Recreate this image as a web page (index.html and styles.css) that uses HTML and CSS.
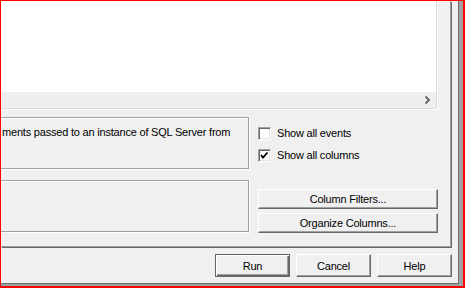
FILE: index.html
```html
<!DOCTYPE html>
<html lang="en">
<head>
  <meta charset="UTF-8" />
  <title>Trace Properties</title>
  <link rel="stylesheet" href="styles.css">
</head>
<body>
  <div class="frame">
    <div class="dialog">
      <div class="dialog-inner">

        <!-- tab page -->
        <div class="page">
          <div class="grid-pane">
            <div class="grid-body"></div>
            <div class="hscroll">
              <svg class="scroll-arrow" width="16" height="16" viewBox="0 0 16 16">
                <polyline points="5.5,4.5 9,8 5.5,11.5" fill="none" stroke="#606060" stroke-width="1.8"/>
              </svg>
            </div>
          </div>

          <div class="options">
            <div class="info-col">
              <div class="groupbox desc">ments passed to an instance of SQL Server from</div>
              <div class="groupbox second"></div>
            </div>

            <div class="side-col">
              <label class="check-row first">
                <span class="check"></span>
                <span>Show all events</span>
              </label>
              <label class="check-row">
                <span class="check">
                  <svg width="11" height="11" viewBox="0 0 11 11">
                    <polyline points="2,5 4,7.5 8.5,2.5" fill="none" stroke="#000" stroke-width="1.8"/>
                  </svg>
                </span>
                <span>Show all columns</span>
              </label>
              <button class="btn wide filters">Column Filters...</button>
              <button class="btn wide">Organize Columns...</button>
            </div>
          </div>
        </div>

        <div class="actions">
          <button class="btn action default">Run</button>
          <button class="btn action">Cancel</button>
          <button class="btn action">Help</button>
        </div>

      </div>
    </div>
  </div>
</body>
</html>
```

FILE: styles.css
```css
* {
  margin: 0;
  padding: 0;
  box-sizing: border-box;
}

body {
  overflow: hidden;
  background: #f0f0f0;
  font-family: "Liberation Sans", Arial, sans-serif;
  font-size: 11px;
  letter-spacing: -0.2px;
  color: #000;
}

.frame {
  width: 465px;
  height: 288px;
  border-style: solid;
  border-color: #ff0000;
  border-width: 1px 2px 2px 1px;
  overflow: hidden;
}

.dialog {
  height: 100%;
  border-right: 4px solid #a0a0a0;
  border-bottom: 2px solid #a0a0a0;
}

.dialog-inner {
  height: 100%;
  display: flex;
  flex-direction: column;
  border-right: 1px solid #6d6d6d;
  border-bottom: 1px solid #6d6d6d;
}

/* tab page */
.page {
  width: 450px;
  height: 246px;
  border-right: 1px solid #a0a0a0;
  border-bottom: 1px solid #a0a0a0;
  box-shadow: 1px 1px 0 #696969;
}

.grid-pane {
  width: 436px;
  height: 108px;
  display: flex;
  flex-direction: column;
  border-right: 1px solid #dcdcdc;
  border-bottom: 1px solid #dcdcdc;
  box-shadow: 1px 1px 0 #fff;
}

.grid-body {
  height: 91px;
  background: #fff;
}

.hscroll {
  height: 16px;
  display: flex;
  justify-content: flex-end;
  background: #efefef;
}

.scroll-arrow {
  display: block;
}

.options {
  display: flex;
  margin-top: 8px;
}

.info-col {
  width: 288px;
  margin-left: -40px;
  display: flex;
  flex-direction: column;
  gap: 11px;
}

.groupbox {
  height: 52px;
  border: 1px solid #a0a0a0;
  box-shadow: 1px 1px 0 #fff, inset 1px 1px 0 #fff;
}

.desc {
  padding: 8px 0 0 40px;
  line-height: 13px;
  white-space: nowrap;
}

.side-col {
  width: 180px;
  margin-left: 9px;
  display: flex;
  flex-direction: column;
}

.check-row {
  display: flex;
  align-items: center;
  gap: 6px;
  height: 13px;
  line-height: 13px;
  margin-top: 9px;
}

.check-row.first {
  margin-top: 10px;
}

.check {
  width: 13px;
  height: 13px;
  display: flex;
  align-items: center;
  justify-content: center;
  background: #fff;
  border: 1px solid;
  border-color: #a0a0a0 #fff #fff #a0a0a0;
  box-shadow: inset 1px 1px 0 #696969, inset -1px -1px 0 #e3e3e3;
}

.check svg {
  display: block;
}

.btn {
  font: inherit;
  letter-spacing: inherit;
  color: #000;
  background: #f0f0f0;
  border: 1px solid;
  border-color: #fff #696969 #696969 #fff;
  box-shadow: inset -1px -1px 0 #a0a0a0;
}

.wide {
  height: 20px;
  margin-top: 4px;
}

.wide.filters {
  margin-top: 27px;
}

.actions {
  display: flex;
  justify-content: flex-end;
  gap: 6px;
  margin-top: 7px;
  padding-right: 6px;
}

.action {
  width: 75px;
  height: 23px;
}

.action.default {
  border-color: #646464;
  box-shadow: inset 1px 1px 0 #fff, inset -1px -1px 0 #696969, inset -2px -2px 0 #a0a0a0;
}
```
